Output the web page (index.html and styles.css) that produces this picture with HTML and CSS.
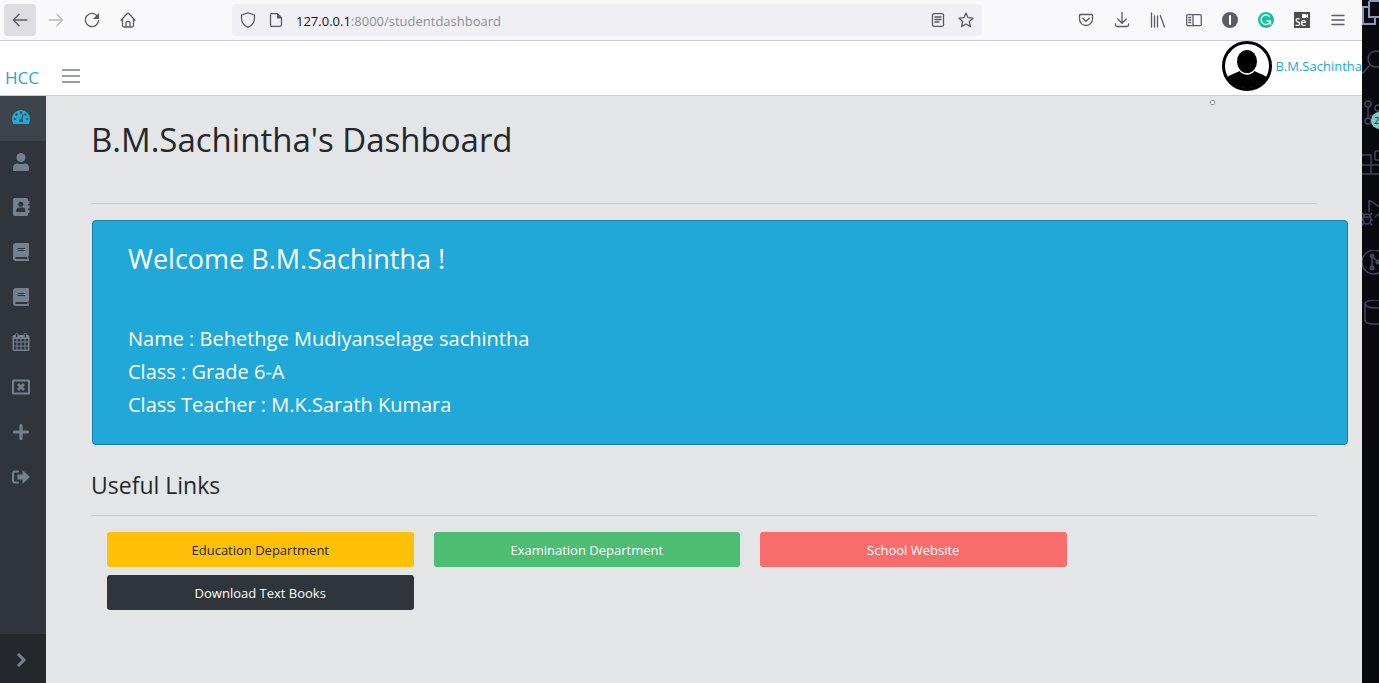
FILE: index.html
```html
<!DOCTYPE html>
<html lang="en">
<head>
<meta charset="utf-8">
<meta name="viewport" content="width=device-width, initial-scale=1">
<title>Student Dashboard</title>
<link rel="stylesheet" href="styles.css">
</head>
<body>
<div class="desktop">
  <div class="browser">
    <div class="toolbar">
      <div class="tool-group">
        <button class="tool active" aria-label="Back"><svg class="i16" viewBox="0 0 16 16"><path d="M15 8H1.5M7 2.300L1.400 8l5.600 5.700"/></svg></button>
        <button class="tool disabled" aria-label="Forward"><svg class="i16" viewBox="0 0 16 16"><path d="M1 8h13.500M9 2.300L14.600 8 9 13.700"/></svg></button>
        <button class="tool" aria-label="Reload"><svg class="i16" viewBox="0 0 16 16"><path d="M13.600 4.500A6.600 6.600 0 1 0 14.600 8.500"/><path class="solid" d="M15 1v6H9z"/></svg></button>
        <button class="tool" aria-label="Home"><svg class="i16" viewBox="0 0 16 16"><path d="M1 8.200L7 1.800q1-1 2 0l6 6.400M2.500 7v6.500q0 1.500 1.500 1.500h8q1.500 0 1.500-1.500V7M6 15v-4q0-1.500 1.500-1.500h1q1.500 0 1.500 1.500v4"/></svg></button>
      </div>
      <div class="url-bar">
        <svg class="i16" viewBox="0 0 16 16"><path d="M8 .8L14.500 3v3c0 4.500-2 7.500-6.500 9.300C3.500 13.500 1.500 10.500 1.500 6V3z"/></svg>
        <svg class="i16 page-icon" viewBox="0 0 16 16"><path d="M3.500 1.700h6l4 4v7.100q0 1.500-1.500 1.500H4q-1.500 0-1.500-1.500V2.700q0-1 1-1z"/><path class="solid" d="M9 1.500v5h5z"/></svg>
        <span class="address" role="textbox" contenteditable="true" aria-label="Address" spellcheck="false"><span class="host">127.0.0.1</span>:8000/studentdashboard</span>
        <button class="inline-tool" aria-label="Reader view"><svg class="i16" viewBox="0 0 16 16"><rect x="2.500" y="1.700" width="11" height="12.600" rx="1.500"/><path d="M5 5h6M5 7.500h6M5 10h4"/></svg></button>
        <button class="inline-tool" aria-label="Bookmark"><svg class="i16" viewBox="0 0 16 16"><path d="M8 1l2 4.700 5 .5-3.700 3.400 1.100 5L8 12l-4.400 2.600 1.100-5L1 6.200l5-.5z"/></svg></button>
      </div>
      <div class="tool-group">
        <button class="tool" aria-label="Pocket"><svg class="i16" viewBox="0 0 16 16"><path d="M2.500 2.500h11q1 0 1 1V7a6.500 6.500 0 0 1-13 0V3.500q0-1 1-1zM4.800 6.200L8 9.300l3.200-3.100"/></svg></button>
        <button class="tool" aria-label="Downloads"><svg class="i16" viewBox="0 0 16 16"><path d="M8 .5v10.500M3.800 7L8 11.200 12.200 7M1.500 12v1q0 1.500 1.500 1.500h10q1.500 0 1.500-1.500v-1"/></svg></button>
        <button class="tool" aria-label="Library"><svg class="i16" viewBox="0 0 16 16"><path d="M1.500 1v14M4.500 4v11M7.500 4v11M10.300 3.500L14.500 15"/></svg></button>
        <button class="tool" aria-label="Sidebars"><svg class="i16" viewBox="0 0 16 16"><rect x=".7" y="2.700" width="14.600" height="11" rx="1.500"/><path d="M7 2.700v11M2.800 5.500h2M2.800 8h2M2.800 10.500h2"/></svg></button>
        <button class="tool" aria-label="Account"><svg class="i16" viewBox="0 0 16 16"><circle class="solid" cx="8" cy="8" r="8"/><path class="white" stroke-width="2" d="M8 4v8"/></svg></button>
        <button class="tool" aria-label="Grammarly"><svg class="i16" viewBox="0 0 16 16"><circle fill="#15c39a" stroke="none" cx="8" cy="8" r="8"/><path class="white" d="M11.600 4.600A4.800 4.800 0 1 0 12.500 9H9M12.500 9v3.500"/></svg></button>
        <button class="tool" aria-label="Selenium"><span class="selenium">Se<svg viewBox="0 0 7 4"><path d="M0 0h4v1l2-1v4L4 3v1H0z"/></svg></span></button>
        <button class="tool" aria-label="Menu"><svg class="i16" viewBox="0 0 16 16"><path d="M2 3.500h12M2 8h12M2 12.500h12"/></svg></button>
      </div>
    </div>

    <header class="app-header">
      <a class="brand" href="#">HCC</a>
      <button class="toggler" aria-label="Toggle sidebar"><svg viewBox="0 0 20 16"><path d="M1 2h18M1 8h18M1 14h18"/></svg></button>
      <a class="user" href="#">
        <svg class="avatar" viewBox="0 0 50 50"><circle cx="25" cy="25" r="23.500" fill="#fff" stroke="#000" stroke-width="3"/><path d="M5 36.500c3-3 9-4.500 12.500-6.500 4 5 11 5 15 0 3.500 2 9.500 3.500 12.500 6.500A24 24 0 0 1 5 36.500z"/><ellipse cx="25" cy="20.500" rx="10" ry="11.500"/></svg>
        <span>B.M.Sachintha</span>
      </a>
    </header>

    <div class="app-body">
      <nav class="sidebar" aria-label="Main">
        <a class="nav-item current" href="#" aria-label="Dashboard"><svg viewBox="0 0 18 18"><path fill="currentColor" d="M9 2a9 9 0 0 0-9 9q0 2.500 1.200 4.700.2.300.6.300h14.400q.4 0 .6-.3Q18 13.500 18 11A9 9 0 0 0 9 2z"/><g fill="#3c4349"><circle cx="2.800" cy="11" r="1.100"/><circle cx="4.600" cy="6.600" r="1.100"/><circle cx="9" cy="4.700" r="1.100"/><circle cx="13.400" cy="6.600" r="1.100"/><circle cx="15.200" cy="11" r="1.100"/><path d="M10.600 6.300l1 .3-1.300 4.700A2 2 0 0 1 10.600 14H7.400a2 2 0 0 1 1.700-3z"/></g></svg></a>
        <a class="nav-item" href="#" aria-label="Profile"><svg viewBox="0 0 18 18"><g fill="currentColor"><circle cx="9" cy="4.500" r="4.500"/><path d="M1 18v-3q0-4.500 4.500-4.500 3.500 1.200 7 0Q17 10.500 17 15v1.500q0 1.500-1.500 1.500z"/></g></svg></a>
        <a class="nav-item" href="#" aria-label="Contacts"><svg viewBox="0 0 18 18"><path fill="currentColor" d="M2.500 0h12Q16 0 16 1.500V3h1.500v3H16v1.500h1.500v3H16V12h1.500v3H16v1.500q0 1.500-1.500 1.500h-12Q1 18 1 16.500v-15Q1 0 2.500 0z"/><g fill="#2f353a"><circle cx="8.800" cy="6.300" r="2.500"/><path d="M4.300 14v-1.500q0-3 3-3h3q3 0 3 3V14z"/></g></svg></a>
        <a class="nav-item" href="#" aria-label="Subjects"><svg viewBox="0 0 18 18"><path fill="currentColor" d="M4 0h12.200q.8 0 .8.800v12l-.6.600v2.500l.6.600V18H4q-3 0-3-3V3q0-3 3-3z"/><path stroke="#2f353a" d="M5.500 5.500h7.500M5.500 7.500h7.500"/><path stroke="#2f353a" stroke-width="2" d="M3.500 15h11.800"/></svg></a>
        <a class="nav-item" href="#" aria-label="Homework"><svg viewBox="0 0 18 18"><path fill="currentColor" d="M4 0h12.200q.8 0 .8.800v12l-.6.600v2.500l.6.600V18H4q-3 0-3-3V3q0-3 3-3z"/><path stroke="#2f353a" d="M5.500 5.500h7.500M5.500 7.500h7.500"/><path stroke="#2f353a" stroke-width="2" d="M3.500 15h11.800"/></svg></a>
        <a class="nav-item" href="#" aria-label="Calendar"><svg viewBox="0 0 18 18"><rect x=".5" y="2" width="17" height="16" rx="1.500" fill="currentColor"/><g fill="#2f353a"><path d="M2 6h2.500v2.500H2zM5.500 6h3v2.500h-3zM9.500 6h3v2.500h-3zM13.500 6H16v2.500h-2.500zM2 9.500h2.500v3H2zM5.500 9.500h3v3h-3zM9.500 9.500h3v3h-3zM13.500 9.500H16v3h-2.500zM2 13.500h2.500v3H2zM5.500 13.500h3v3h-3zM9.500 13.500h3v3h-3zM13.500 13.500H16v3h-2.500z"/></g><g fill="#2f353a" stroke="currentColor"><rect x="3.500" y=".5" width="2.500" height="4" rx="1"/><rect x="12" y=".5" width="2.500" height="4" rx="1"/></g></svg></a>
        <a class="nav-item" href="#" aria-label="Absences"><svg viewBox="0 0 18 18"><rect x="1" y="2.500" width="16" height="13" rx=".5" fill="none" stroke="currentColor" stroke-width="2"/><path stroke="currentColor" stroke-width="2.600" d="M6 6l6 6M12 6l-6 6"/></svg></a>
        <a class="nav-item" href="#" aria-label="Add"><svg viewBox="0 0 18 18"><path stroke="currentColor" stroke-width="3.200" stroke-linecap="round" d="M9 2.500v13M2.500 9h13"/></svg></a>
        <a class="nav-item" href="#" aria-label="Log out"><svg viewBox="0 0 18 18"><path fill="none" stroke="currentColor" stroke-width="2" stroke-linecap="round" d="M6 3.500H3q-2 0-2 2v7q0 2 2 2h3"/><path fill="currentColor" d="M5.500 6.500h5V3.200q0-1 .8-.4L18 9l-6.700 6.200q-.8.600-.8-.4v-3.300h-5z"/></svg></a>
        <button class="minimizer" aria-label="Expand sidebar"><svg viewBox="0 0 18 18"><path fill="none" stroke="currentColor" stroke-width="3" d="M6 3l6 6-6 6"/></svg></button>
      </nav>

      <main class="content">
        <svg class="pointer" viewBox="0 0 6 6"><rect x=".5" y=".5" width="4" height="4" rx="1" fill="#f4f4f4" stroke="#888"/></svg>
        <h1>B.M.Sachintha's Dashboard</h1>
        <hr>
        <section class="welcome">
          <h2>Welcome B.M.Sachintha !</h2>
          <p>Name : Behethge Mudiyanselage sachintha</p>
          <p>Class : Grade 6-A</p>
          <p>Class Teacher : M.K.Sarath Kumara</p>
        </section>
        <h3>Useful Links</h3>
        <hr>
        <div class="links">
          <a class="btn yellow" href="#">Education Department</a>
          <a class="btn green" href="#">Examination Department</a>
          <a class="btn red" href="#">School Website</a>
          <a class="btn dark" href="#">Download Text Books</a>
        </div>
      </main>
    </div>
  </div>

  <aside class="activity" aria-label="Editor activity bar">
    <svg viewBox="0 0 17 50"><g stroke="#8d94c0" stroke-width="2"><path d="M7 7H1v17h12v-6M7 1v16h12M7 1h12"/></g></svg>
    <svg viewBox="0 0 17 50"><circle cx="14" cy="9" r="8"/><path d="M8 15L0 24"/></svg>
    <svg viewBox="0 0 17 50"><circle cx="6" cy="4" r="3"/><circle cx="6" cy="21" r="3"/><circle cx="16" cy="8" r="3"/><path d="M6 7v11M8 16q7 0 8-5"/></svg>
    <svg viewBox="0 0 17 50"><path d="M0 5h9v19M0 15h17M0 24h17"/><rect x="13" y="1" width="9" height="9" rx="1"/></svg>
    <svg viewBox="0 0 17 50"><path d="M7 12V0l15 10-9 7"/><ellipse cx="5" cy="19" rx="4" ry="5"/><path d="M1 17h8M0 13l2 2M10 13l-2 2M0 20h2M8 20h3M0 25l2-2M10 25l-2-2"/></svg>
    <svg viewBox="0 0 17 50"><circle cx="12" cy="12" r="12"/><path d="M10 6v12M10 6l6 6"/><g class="dots"><circle cx="10" cy="6" r="2.500"/><circle cx="10" cy="18" r="2.500"/><circle cx="16" cy="12" r="2.500"/></g></svg>
    <svg viewBox="0 0 17 50"><ellipse cx="13" cy="4" rx="10" ry="4"/><path d="M3 4v16q0 4 10 4h6"/></svg>
    <span class="badge">2</span>
  </aside>
</div>
</body>
</html>
```
FILE: styles.css
```css
* { box-sizing: border-box; }

body {
  margin: 0;
  font-family: "Open Sans", "Noto Sans", sans-serif;
  font-size: 13px;
  color: #23282c;
}

button {
  border: 0;
  padding: 0;
  background: none;
  font: inherit;
  color: inherit;
}

a { text-decoration: none; }

.desktop {
  display: flex;
  min-height: 100vh;
  overflow: hidden;
}

.browser {
  flex: 1;
  min-width: 0;
  display: flex;
  flex-direction: column;
}

/* Browser toolbar */
.toolbar {
  display: flex;
  align-items: center;
  gap: 88px;
  padding: 4px 8px 4px 4px;
  background: #f9f9fb;
  border-bottom: 1px solid #ccccd0;
}

.tool-group { display: flex; gap: 4px; }

.tool {
  width: 32px;
  height: 32px;
  display: grid;
  place-items: center;
  border-radius: 4px;
}

.tool.active { background: #dddde2; }
.tool.disabled { opacity: 0.4; }

.i16 {
  width: 16px;
  height: 16px;
  flex: none;
  display: block;
  fill: none;
  stroke: #5b5b66;
  stroke-width: 1.300;
  stroke-linejoin: round;
  stroke-linecap: round;
}

.i16 .solid { fill: #5b5b66; stroke: none; }
.i16 .white { stroke: #fff; }

.url-bar {
  flex: 1;
  min-width: 0;
  height: 32px;
  display: flex;
  align-items: center;
  gap: 12px;
  padding: 0 8px;
  border-radius: 4px;
  background: #f0f0f4;
}

.address {
  flex: 1;
  color: #8f8f98;
  white-space: nowrap;
  outline: 0;
  padding-top: 2px;
}

.host { color: #15141a; }

.selenium {
  position: relative;
  width: 16px;
  height: 16px;
  padding: 5px 0 0 1px;
  background: #4d4d4d;
  color: #fff;
  font-size: 10px;
  font-weight: 600;
  line-height: 11px;
  text-align: left;
}

.selenium svg {
  position: absolute;
  top: 2px;
  right: 1px;
  width: 7px;
  height: 4px;
  fill: #fff;
}

/* Application header */
.app-header {
  display: flex;
  align-items: flex-start;
  height: 55px;
  background: #fff;
  border-bottom: 1px solid #c8ced3;
}

.brand {
  width: 56px;
  padding: 24px 0 0 5px;
  color: #20a8d8;
  font-size: 17px;
  line-height: 26px;
}

.toggler {
  width: 30px;
  margin-top: 27px;
  display: grid;
  place-items: center;
}

.toggler svg {
  width: 20px;
  height: 16px;
  stroke: #73818f;
  stroke-width: 1.600;
}

.user {
  margin-left: auto;
  display: flex;
  align-items: center;
  gap: 3px;
  color: #20a8d8;
}

.avatar { width: 50px; height: 50px; }

/* Sidebar */
.app-body { flex: 1; display: flex; }

.sidebar {
  width: 46px;
  display: flex;
  flex-direction: column;
  background: #2f353a;
  color: #73818f;
}

.nav-item {
  height: 45px;
  display: grid;
  place-items: center;
  padding: 0 5px 3px 0;
  color: #73818f;
}

.nav-item svg,
.minimizer svg { width: 18px; height: 18px; }

.nav-item.current { background: #3c4349; color: #20a8d8; }

.minimizer {
  height: 49px;
  margin-top: auto;
  padding: 2px 5px 0 0;
  display: grid;
  place-items: center;
  background: #24282c;
}

/* Page content */
.content {
  position: relative;
  flex: 1;
  min-width: 0;
  padding: 20px 45px 0;
  background: #e4e5e6;
}

.pointer {
  position: absolute;
  top: 4px;
  right: 146px;
  width: 6px;
  height: 6px;
}

h1, h2, h3, p { margin: 0; font-weight: 400; }

h1 { font-size: 33px; line-height: 47px; margin-bottom: 40px; }

hr {
  margin: 0 0 16px;
  border: 0;
  border-top: 1px solid #c9cbcd;
}

.welcome {
  margin: 0 -31px 24px 1px;
  padding: 18px 35px 23px;
  border: 1px solid #187da0;
  border-radius: 4px;
  background: #20a8d8;
  color: #fff;
}

.welcome h2 { font-size: 27px; line-height: 40px; margin-bottom: 43px; }
.welcome p { font-size: 20px; line-height: 33px; }

h3 { font-size: 23px; line-height: 32px; margin-bottom: 14px; }

.links {
  display: flex;
  flex-wrap: wrap;
  gap: 8px 20px;
  padding-left: 16px;
  margin-right: -16px;
}

.btn {
  width: 25%;
  height: 35px;
  border-radius: 3px;
  color: #fff;
  line-height: 36px;
  text-align: center;
}

.yellow { background: #ffc107; color: #23282c; }
.green { background: #4dbd74; }
.red { background: #f86c6b; }
.dark { background: #2f353a; }

/* Editor strip beside the browser */
.activity {
  position: relative;
  width: 17px;
  flex: none;
  display: flex;
  flex-direction: column;
  background: #090a0f;
  overflow: hidden;
}

.activity svg {
  width: 17px;
  height: 50px;
  flex: none;
  fill: none;
  stroke: #41465b;
  stroke-width: 1.500;
}

.activity .dots { fill: #41465b; stroke: none; }

.badge {
  position: absolute;
  top: 112px;
  left: 9px;
  width: 17px;
  height: 17px;
  padding-left: 3px;
  border-radius: 50%;
  background: #80cbc4;
  color: #111;
  font-size: 9px;
  line-height: 17px;
}
```
